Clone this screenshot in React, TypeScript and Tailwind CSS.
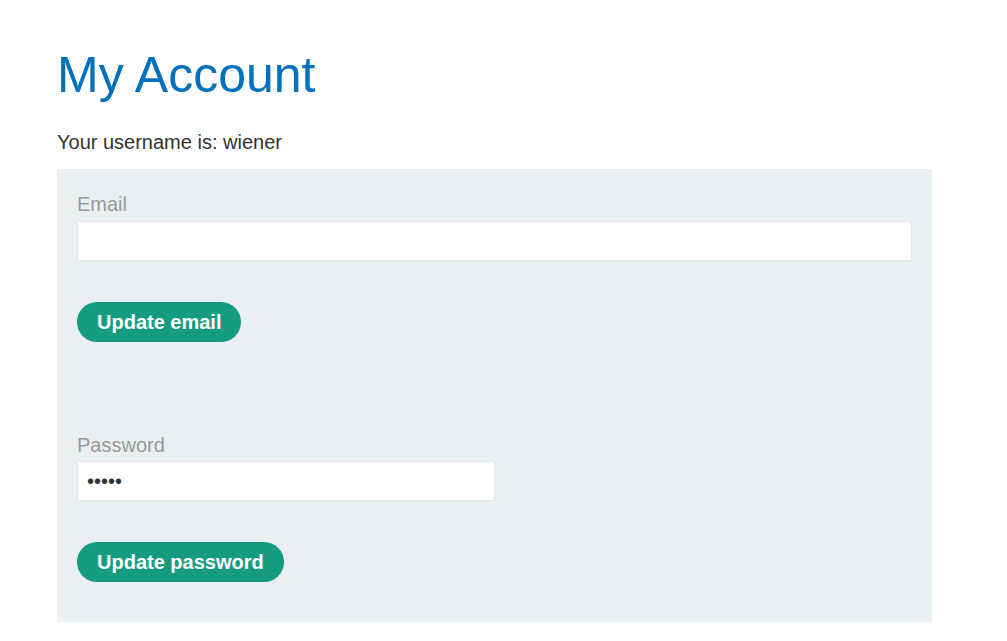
export default function App() {
  return (
    <div className="min-h-[641px] bg-white pl-[57px] pt-[50px] text-[#333332]" style={{ fontFamily: '"Liberation Sans", Arial, sans-serif' }}>
      <h1 className="text-[50px] leading-[50px] font-normal text-[#0071bc]">My Account</h1>
      <p className="mt-[30px] text-[20px] leading-[24px]">Your username is: wiener</p>
      <div className="mt-[15px] w-[875px] bg-[#eaeff2] px-[20px] pt-[23px] pb-[40px]">
        <label className="block text-[20px] leading-[24px] text-[#999999]">Email</label>
        <input
          type="email"
          readOnly
          className="mt-[5px] block h-[40px] w-[835px] border border-[#e6e6e6] bg-white px-[10px] text-[16px] outline-none"
        />
        <button className="mt-[41px] block h-[40px] rounded-full bg-[#159c80] px-[20px] text-[20px] font-bold leading-[24px] text-white">
          Update email
        </button>
        <label className="mt-[91px] block text-[20px] leading-[24px] text-[#999999]">Password</label>
        <input
          type="password"
          readOnly
          defaultValue="peter"
          className="mt-[4px] block h-[40px] w-[418px] border border-[#e6e6e6] bg-white px-[9px] text-[20px] text-[#333332] outline-none"
        />
        <button className="mt-[41px] block h-[40px] rounded-full bg-[#159c80] px-[20px] text-[20px] font-bold leading-[24px] text-white">
          Update password
        </button>
      </div>
    </div>
  );
}
